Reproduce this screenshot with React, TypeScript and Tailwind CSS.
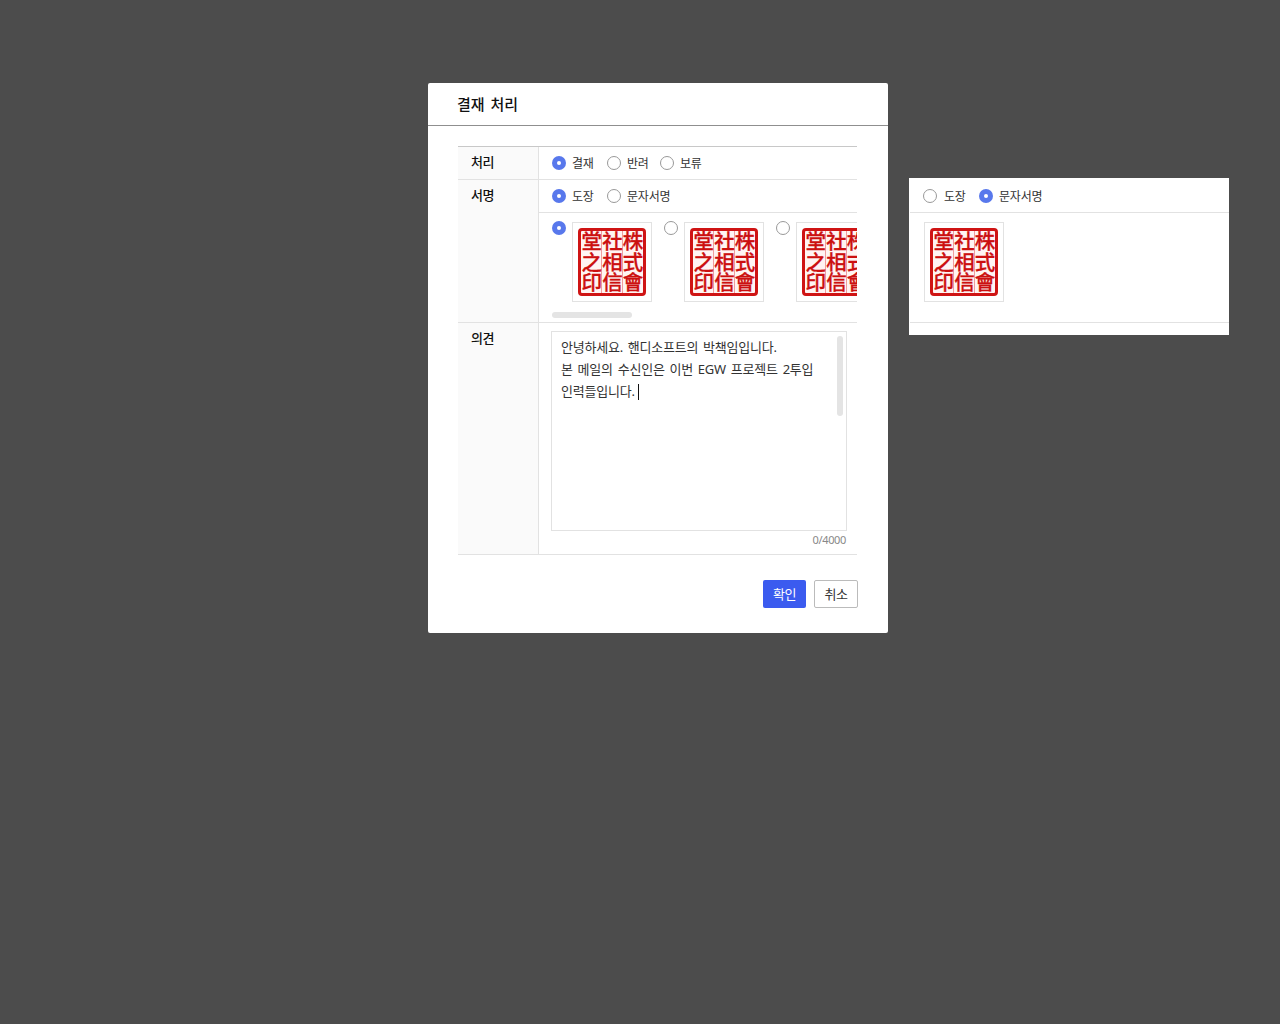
import React from 'react';

function Seal() {
  return (
    <div className="flex h-[80px] w-[80px] shrink-0 items-center justify-center border border-[#e2e2e2] bg-white">
      <div className="flex h-[68px] w-[68px] items-center justify-center rounded-[4px] border-[3px] border-[#cf1414] bg-[#fff4f3]">
        <div className="h-[62px] w-[62px] bg-[linear-gradient(90deg,transparent_20px,#e0484880_20px,#e0484880_21px,transparent_21px,transparent_41px,#e0484880_41px,#e0484880_42px,transparent_42px)] font-['Noto_Sans_CJK_TC',sans-serif] text-[20.5px] leading-[20.6px] font-medium break-all text-[#cc1010] [writing-mode:vertical-rl] [-webkit-text-stroke:0.3px_#cc1010]">
          株式會社相信堂之印
        </div>
      </div>
    </div>
  );
}

function Dot({ checked = false }: { checked?: boolean }) {
  return checked ? (
    <span className="flex h-[14px] w-[14px] shrink-0 items-center justify-center rounded-full bg-[#5878ec]">
      <span className="h-1 w-1 rounded-full bg-white" />
    </span>
  ) : (
    <span className="block h-[14px] w-[14px] shrink-0 rounded-full border border-[#999] bg-white" />
  );
}

function Radio({ label, checked, className = 'gap-[6px]' }: { label: string; checked?: boolean; className?: string }) {
  return (
    <label className={`flex shrink-0 items-center text-[12px] leading-[14px] tracking-[-0.2px] whitespace-nowrap text-[#333] ${className}`}>
      <Dot checked={checked} />
      <span className="pt-[2px] leading-[14px]">{label}</span>
    </label>
  );
}

function Heading({ children }: { children: React.ReactNode }) {
  return (
    <div className="w-[81px] shrink-0 border-r border-[#e2e2e2] bg-[#fafafa] pt-[6px] pl-[13px] text-[13px] leading-[18px] font-medium tracking-[-0.4px] text-[#111]">
      {children}
    </div>
  );
}

export default function App() {
  return (
    <div className="flex h-[1024px] w-[1280px] items-start overflow-hidden bg-[#4c4c4c] pl-[428px] font-['Noto_Sans','Noto_Sans_CJK_KR',sans-serif]">
      <section className="mt-[83px] h-[550px] w-[460px] shrink-0 rounded-[2px] bg-white">
        <header className="h-[43px] border-b border-[#8f8f8f] pl-[29px]">
          <h1 className="text-[15px] leading-[42px] font-medium text-[#111] [word-spacing:2px]">결재 처리</h1>
        </header>

        <div className="mt-[20px] ml-[30px] w-[399px] border-t border-[#c8c8c8]">
          <div className="flex h-[33px] border-b border-[#e2e2e2]">
            <Heading>처리</Heading>
            <div className="flex items-center pl-[13px]">
              <Radio label="결재" checked className="w-[55px] gap-[6px]" />
              <Radio label="반려" className="w-[53px] gap-[6px]" />
              <Radio label="보류" />
            </div>
          </div>

          <div className="flex h-[143px] border-b border-[#e2e2e2]">
            <Heading>서명</Heading>
            <div className="w-[318px]">
              <div className="flex h-[33px] items-center border-b border-[#e2e2e2] pl-[13px]">
                <Radio label="도장" checked className="w-[55px] gap-[6px]" />
                <Radio label="문자서명" />
              </div>
              <div className="ml-[13px] flex gap-3 overflow-hidden pt-[9px]">
                {[true, false, false].map((checked, i) => (
                  <div key={i} className="flex shrink-0 gap-[6px]">
                    <div className="-mt-[1px]">
                      <Dot checked={checked} />
                    </div>
                    <Seal />
                  </div>
                ))}
              </div>
              <div className="mt-[10px] ml-[13px] h-[6px] w-[80px] rounded-full bg-[#e4e4e4]" />
            </div>
          </div>

          <div className="flex h-[232px] border-b border-[#e2e2e2]">
            <Heading>의견</Heading>
            <div className="pt-[8px] pl-[12px]">
              <div className="flex h-[200px] w-[296px] justify-between border border-[#e2e2e2] pr-[3px] pl-[9px]">
                <div className="pt-[4px] text-[13px] leading-[22px] tracking-[-0.22px] whitespace-nowrap text-[#333] [word-spacing:1.7px]">
                  <p>안녕하세요. 핸디소프트의 박책임입니다.</p>
                  <p>본 메일의 수신인은 이번 EGW 프로젝트 2투입</p>
                  <p className="flex items-center">
                    인력들입니다.
                    <span className="mt-[2px] ml-[3px] h-[16px] w-px bg-[#111]" />
                  </p>
                </div>
                <div className="mt-[4px] h-[80px] w-[6px] rounded-full bg-[#e4e4e4]" />
              </div>
              <p className="w-[295px] text-right text-[11px] leading-[18px] tracking-[-0.35px] text-[#888]">0/4000</p>
            </div>
          </div>
        </div>

        <footer className="mt-[25px] mr-[30px] flex justify-end gap-2 text-[13px] tracking-[-0.4px]">
          <button className="h-[28px] w-[43px] rounded-[2px] bg-[#3b5bef] leading-[28px] whitespace-nowrap text-white">확인</button>
          <button className="h-[28px] w-[44px] rounded-[2px] border border-[#bbb] bg-white leading-[26px] whitespace-nowrap text-[#333]">취소</button>
        </footer>
      </section>

      <section className="mt-[178px] ml-[21px] h-[157px] w-[320px] shrink-0 bg-white pl-[1px]">
        <div className="flex h-[35px] items-center border-b border-[#e2e2e2] pt-[1px] pl-[13px]">
          <Radio label="도장" className="w-[56px] gap-[7px]" />
          <Radio label="문자서명" checked />
        </div>
        <div className="h-[110px] border-b border-[#e2e2e2] pt-[9px] pl-[14px]">
          <Seal />
        </div>
      </section>
    </div>
  );
}
